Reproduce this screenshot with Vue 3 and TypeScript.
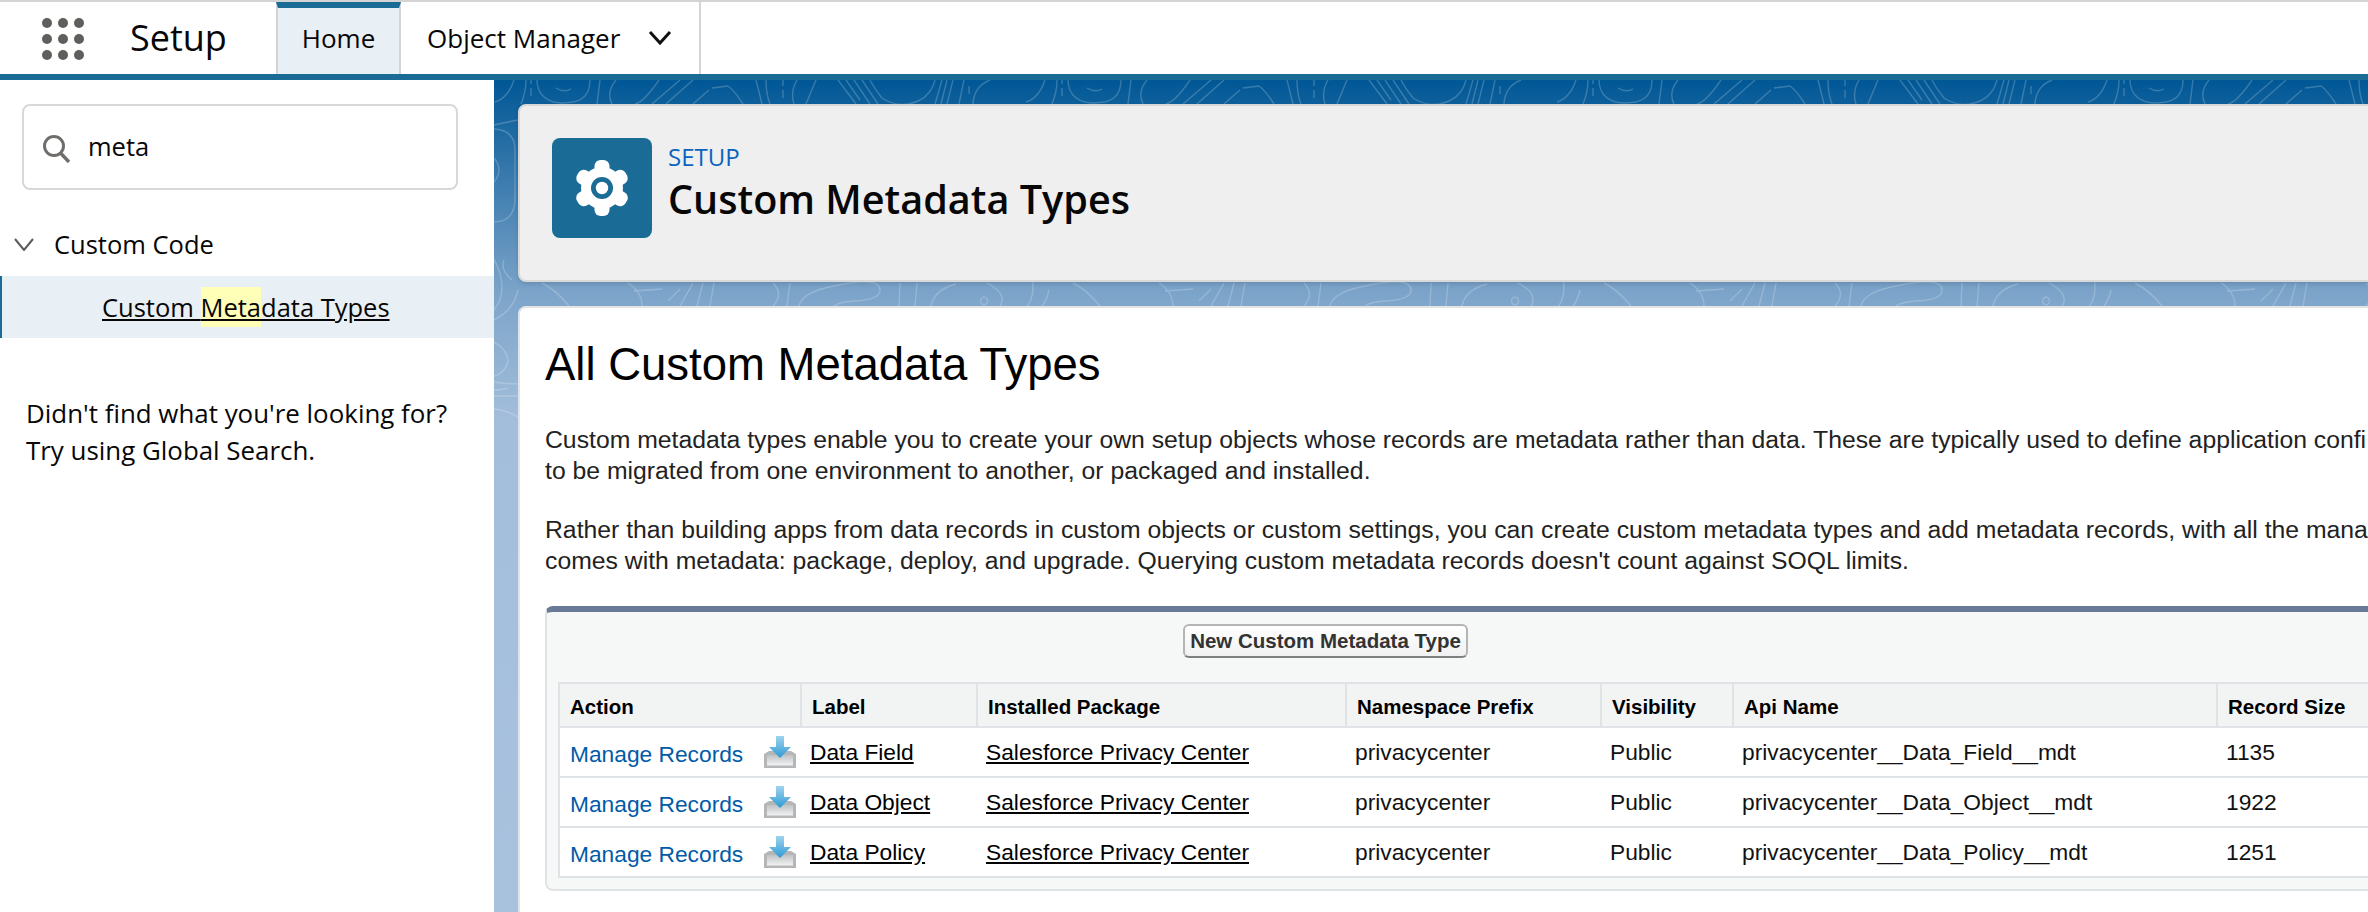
<script setup lang="ts">
interface Row { label: string; api: string; size: string }
const rows: Row[] = [
  { label: 'Data Field', api: 'privacycenter__Data_Field__mdt', size: '1135' },
  { label: 'Data Object', api: 'privacycenter__Data_Object__mdt', size: '1922' },
  { label: 'Data Policy', api: 'privacycenter__Data_Policy__mdt', size: '1251' },
]
const headers = ['Action', 'Label', 'Installed Package', 'Namespace Prefix', 'Visibility', 'Api Name', 'Record Size']
const gridDots = [0, 16, 32].flatMap((y) => [0, 16, 32].map((x) => ({ x: 5 + x, y: 5 + y })))
const teeth = [0, 60, 120, 180, 240, 300]
</script>

<template>
  <div class="page">
    <header class="nav">
      <svg class="launcher" width="42" height="42" viewBox="0 0 42 42">
        <circle v-for="d in gridDots" :key="d.x + '-' + d.y" :cx="d.x" :cy="d.y" r="5" fill="#605e5a" />
      </svg>
      <div class="app-name">Setup</div>
      <div class="tab tab-active">Home</div>
      <div class="tab tab-menu">
        <span>Object Manager</span>
        <svg width="24" height="16" viewBox="0 0 24 16">
          <path d="M2 2 L12 13 L22 2" fill="none" stroke="#111" stroke-width="3" />
        </svg>
      </div>
    </header>

    <div class="body">
      <aside class="side">
        <div class="search">
          <svg width="30" height="28" viewBox="0 0 30 28">
            <circle cx="12" cy="11" r="9.5" fill="none" stroke="#706e6b" stroke-width="3" />
            <path d="M18.5 18 L27 27" stroke="#706e6b" stroke-width="3.4" />
          </svg>
          <span class="query">meta</span>
        </div>
        <div class="tree-head">
          <svg width="20" height="14" viewBox="0 0 20 14">
            <path d="M1 2 L10 13 L19 2" fill="none" stroke="#5c5c5c" stroke-width="2" />
          </svg>
          <span>Custom Code</span>
        </div>
        <div class="tree-item">
          <a class="tree-link">Custom <mark>Meta</mark>data Types</a>
        </div>
        <p class="hint">Didn't find what you're looking for?<br />Try using Global Search.</p>
      </aside>

      <main class="main">
        <svg class="contours" width="1874" height="380" aria-hidden="true">
          <defs>
            <pattern id="topo" x="0" y="0" width="531" height="380" patternUnits="userSpaceOnUse">
              <g fill="none" stroke="#fff" stroke-opacity="0.2" stroke-width="1.4">
                <path d="M1 22 Q14 18 20 0 M27 24 Q32 12 32 0 M37 0V4 M37 8V16 M43 0 C43 16 55 23 68 23 C85 23 96 18 96 0 M62 8 q8 5 15 1" />
                <path d="M106 0 L103 24 M122 0 Q112 12 118 24 M141 24 Q150 22 165 0 M158 24 L186 0 M172 24 L199 0 M199 24 L215 10 M218 8 L234 6 Q240 10 249 24" />
                <path d="M262 0 Q265 12 268 24 M272 0 Q272 14 276 24 M289 0V6 M289 10V18 M303 0 Q296 12 300 24 M322 0 L312 24" />
                <path d="M344 0 L362 24 M352 0 L366 20 M360 0 L376 24 M368 0 L384 24 M376 0 Q380 8 388 18 Q400 26 414 24 Q436 20 441 0 M441 24 L448 0 M447 24 L453 0 M453 24 L459 0 M465 24 L470 0 M475 6 V14 M479 24 Q480 6 496 0" />
                <path d="M48 203 Q62 210 75 226 M134 203 Q148 212 148 226 M140 211 L168 209 M174 221 L186 209 M199 203 L186 226 M209 203 L203 226 M220 203 L216 226" />
                <path d="M279 203 Q290 214 279 226 M296 203 L293 226 M305 226 Q308 212 340 206 Q386 196 386 210 Q386 220 360 221 Q345 222 340 226 M406 203 L405 226 M423 203 L421 226 M437 226 Q440 210 462 204 M490 217 a3.5 4 0 1 0 .1 0 M493 203 Q514 214 506 226" />
                <path d="M0 49 Q21 50 21 70 L21 120 Q20 142 0 142 M0 45 Q14 42 24 40 M0 78 Q10 90 0 102 M10 180 Q6 190 18 200 M0 179 Q16 210 0 230 M0 240 Q20 230 24 210 M0 262 Q14 270 14 282 Q10 294 0 296" />
                <path d="M0 302 Q12 304 24 304 M0 310 Q8 310 14 308 M0 316 H24 M0 329 Q12 330 24 337" />
              </g>
            </pattern>
          </defs>
          <rect width="1874" height="380" fill="url(#topo)" />
        </svg>

        <section class="page-head">
          <div class="head-icon">
            <svg width="60" height="60" viewBox="-30 -30 60 60">
              <circle r="21" fill="#fff" />
              <rect v-for="t in teeth" :key="t" x="-7.5" y="-28" width="15" height="18" rx="6" fill="#fff" :transform="`rotate(${t})`" />
              <circle r="11" fill="#1b6b97" />
              <circle r="6.2" fill="#fff" />
            </svg>
          </div>
          <div class="head-text">
            <div class="eyebrow">SETUP</div>
            <h1>Custom Metadata Types</h1>
          </div>
        </section>

        <section class="content">
          <h2>All Custom Metadata Types</h2>
          <div class="copy">
            <div>Custom metadata types enable you to create your own setup objects whose records are metadata rather than data. These are typically used to define application confi</div>
            <div>to be migrated from one environment to another, or packaged and installed.</div>
          </div>
          <div class="copy copy-2">
            <div>Rather than building apps from data records in custom objects or custom settings, you can create custom metadata types and add metadata records, with all the mana</div>
            <div>comes with metadata: package, deploy, and upgrade. Querying custom metadata records doesn't count against SOQL limits.</div>
          </div>

          <div class="panel">
            <div class="btn-row"><button class="btn" type="button">New Custom Metadata Type</button></div>
            <table class="grid">
              <colgroup>
                <col style="width: 240px" />
                <col style="width: 176px" />
                <col style="width: 369px" />
                <col style="width: 255px" />
                <col style="width: 132px" />
                <col style="width: 484px" />
                <col style="width: 161px" />
              </colgroup>
              <thead>
                <tr><th v-for="h in headers" :key="h">{{ h }}</th></tr>
              </thead>
              <tbody>
                <tr v-for="r in rows" :key="r.api">
                  <td>
                    <div class="action">
                      <a class="manage">Manage Records</a>
                      <svg width="32" height="32" viewBox="0 0 32 32">
                        <defs>
                          <linearGradient id="tray" x1="0" y1="0" x2="0" y2="1">
                            <stop offset="0" stop-color="#bfc2c4" />
                            <stop offset="1" stop-color="#f2f2f2" />
                          </linearGradient>
                          <linearGradient id="arrow" x1="0" y1="0" x2="0" y2="1">
                            <stop offset="0" stop-color="#9fd4ee" />
                            <stop offset="1" stop-color="#2f9ad6" />
                          </linearGradient>
                        </defs>
                        <path d="M5 15 L0 18 V32 H32 V18 L27 15 Z" fill="#b4b6b8" />
                        <rect x="3" y="19" width="26" height="10.5" fill="url(#tray)" />
                        <path d="M12 0 H20 V11 H27 L16 22 L5 11 H12 Z" fill="url(#arrow)" />
                      </svg>
                    </div>
                  </td>
                  <td><a class="data-link">{{ r.label }}</a></td>
                  <td><a class="data-link">Salesforce Privacy Center</a></td>
                  <td>privacycenter</td>
                  <td>Public</td>
                  <td>{{ r.api }}</td>
                  <td>{{ r.size }}</td>
                </tr>
              </tbody>
            </table>
          </div>
        </section>
      </main>
    </div>
  </div>
</template>

<style>
html, body { margin: 0; background: #fff; overflow: hidden; }
</style>

<style scoped>
.page {
  width: 2368px;
  height: 912px;
  display: flex;
  flex-direction: column;
  overflow: hidden;
  font-family: "Open Sans", "Noto Sans", sans-serif;
  color: #080707;
}
.nav {
  flex: none;
  height: 72px;
  display: flex;
  align-items: stretch;
  background: #fff;
  border-top: 2px solid #d4d4d4;
  border-bottom: 6px solid #1b6b97;
}
.launcher { margin: 16px 0 0 42px; }
.app-name {
  width: 192px;
  padding-left: 46px;
  box-sizing: border-box;
  font-size: 36px;
  line-height: 72px;
}
.tab {
  box-sizing: border-box;
  font-size: 26px;
  line-height: 72px;
  border-right: 2px solid #d4d4d4;
}
.tab-active {
  width: 125px;
  text-align: center;
  background: #e8eff5;
  border-left: 2px solid #d4d4d4;
  border-top: 6px solid #1b6b97;
  line-height: 60px;
}
.tab-menu {
  width: 300px;
  padding-left: 26px;
  display: flex;
  align-items: center;
  gap: 28px;
}
.body { flex: 1; display: flex; min-height: 0; }
.side {
  flex: none;
  width: 494px;
  background: #fff;
  font-size: 25.5px;
}
.search {
  box-sizing: border-box;
  width: 436px;
  height: 86px;
  margin: 24px 0 0 22px;
  padding: 4px 0 0 18px;
  display: flex;
  align-items: center;
  gap: 16px;
  border: 2px solid #d8d8d8;
  border-radius: 8px;
}
.query { margin-top: -7px; }
.tree-head {
  height: 40px;
  margin-top: 34px;
  padding-left: 14px;
  display: flex;
  align-items: center;
  gap: 20px;
}
.tree-item {
  box-sizing: border-box;
  height: 62px;
  margin-top: 12px;
  padding-left: 100px;
  display: flex;
  align-items: center;
  background: #e8eff5;
  border-left: 2px solid #1b6b97;
}
.tree-link { text-decoration: underline; }
mark { background: #ffffb8; color: inherit; padding: 3px 0; }
.hint { margin: 57px 0 0 26px; font-size: 25.9px; line-height: 37px; }
.main {
  position: relative;
  flex: 1;
  min-width: 0;
  padding: 24px 0 0 24px;
  overflow: hidden;
  display: flex;
  flex-direction: column;
  gap: 24px;
  background: linear-gradient(180deg, #005795 0, #7ba3c9 210px, #a3bedb 340px, #a8c2de 100%);
}
.contours { position: absolute; left: 0; top: 0; }
.page-head {
  position: relative;
  flex: none;
  box-sizing: border-box;
  height: 178px;
  margin-right: -20px;
  padding: 32px 0 0 32px;
  display: flex;
  gap: 16px;
  background: #efefef;
  border: 2px solid #d8d8d8;
  border-radius: 8px;
  box-shadow: 0 2px 4px rgba(0, 0, 0, 0.12);
}
.head-icon {
  flex: none;
  width: 100px;
  height: 100px;
  display: flex;
  align-items: center;
  justify-content: center;
  background: #1b6b97;
  border-radius: 8px;
}
.eyebrow { margin-top: 2px; font-size: 24px; line-height: 34px; color: #0b63c0; }
h1 { margin: 0; font-size: 39.6px; line-height: 50px; font-weight: 600; color: #080707; }
.content {
  position: relative;
  flex: 1;
  margin-right: -20px;
  padding: 0 0 0 25px;
  background: #fff;
  border-top: 2px solid #e4e4e4;
  border-left: 2px solid #dfe4ea;
  border-radius: 8px 0 0 0;
  font-family: "Liberation Sans", Arial, sans-serif;
}
h2 {
  margin: 32px 0 0;
  font-size: 45.5px;
  line-height: 50px;
  font-weight: 400;
  color: #000;
}
.copy { margin-top: 34px; font-size: 24.75px; line-height: 31px; color: #222; white-space: nowrap; }
.copy-2 { margin-top: 28px; }
.panel {
  box-sizing: border-box;
  width: 1900px;
  height: 285px;
  margin: 30px 0 0 0;
  padding: 12px 11px 0;
  background: #f6f7f7;
  border: 2px solid #e0e3e5;
  border-top: 6px solid #6a7a96;
  border-radius: 8px 8px 8px 8px;
}
.btn-row { height: 58px; padding-left: 625px; }
.btn {
  box-sizing: border-box;
  width: 285px;
  height: 34px;
  padding: 0;
  font-family: "Liberation Sans", Arial, sans-serif;
  font-size: 20.5px;
  font-weight: 700;
  color: #333;
  background: linear-gradient(#fff, #f1f1f1);
  border: 2px solid #b5b5b5;
  border-bottom-color: #7f7f7f;
  border-radius: 6px;
}
.grid {
  table-layout: fixed;
  width: 1817px;
  border-collapse: separate;
  border-spacing: 0;
  background: #fff;
  border: 2px solid #e0e3e5;
  border-bottom: 0;
  font-size: 22.75px;
  color: #111;
}
th {
  box-sizing: border-box;
  height: 44px;
  padding: 3px 0 0 10px;
  text-align: left;
  font-size: 20.5px;
  font-weight: 700;
  color: #000;
  background: #f2f3f3;
  border-left: 2px solid #e0e3e5;
  border-bottom: 2px solid #e0e3e5;
}
th:first-child { border-left: 0; }
td {
  box-sizing: border-box;
  height: 50px;
  padding: 0 0 0 10px;
  border-bottom: 2px solid #e0e3e5;
  white-space: nowrap;
}
.action { display: flex; align-items: center; }
.manage { width: 194px; padding-top: 4px; color: #015ba7; }
.data-link { color: #000; text-decoration: underline; }
</style>
